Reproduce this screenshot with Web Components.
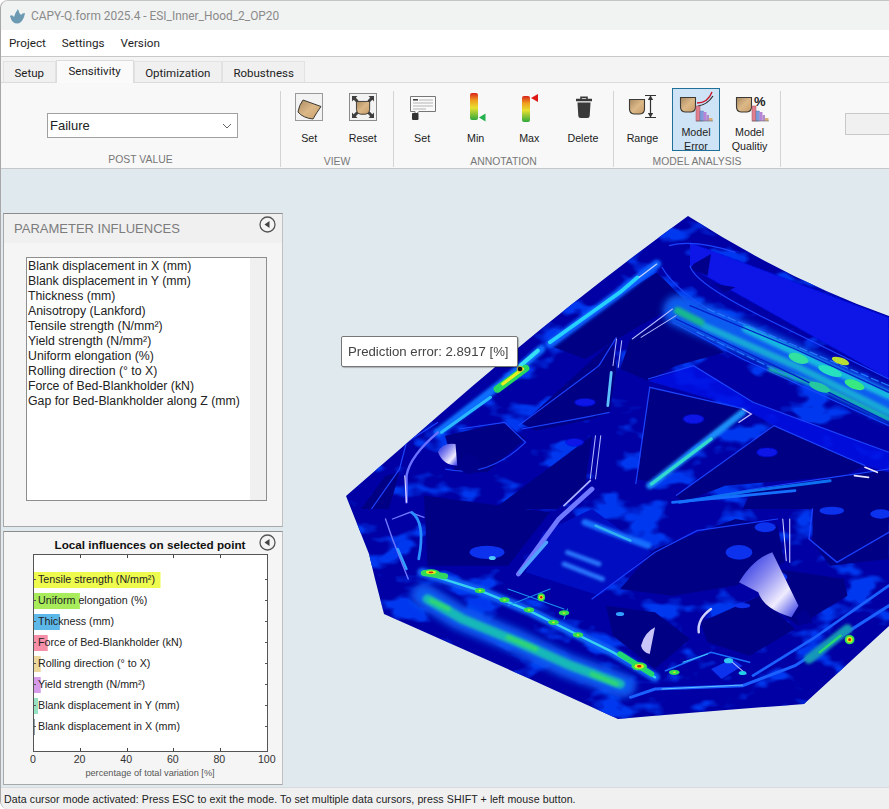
<!DOCTYPE html>
<html lang="en">
<head>
<meta charset="utf-8">
<title>CAPY-Q.form</title>
<style>
html,body{margin:0;padding:0;background:#fff}
body{font-family:"Liberation Sans",Arial,sans-serif;color:#222;width:889px;height:809px;overflow:hidden}
</style>
</head>
<body>
<capy-window>
  <capy-titlebar slot="top">CAPY-Q.form 2025.4 - ESI_Inner_Hood_2_OP20</capy-titlebar>
  <capy-menubar slot="top"><span>Project</span><span>Settings</span><span>Version</span></capy-menubar>
  <capy-tabs slot="top">
    <capy-tab>Setup</capy-tab>
    <capy-tab active>Sensitivity</capy-tab>
    <capy-tab>Optimization</capy-tab>
    <capy-tab>Robustness</capy-tab>
  </capy-tabs>
  <capy-toolstrip slot="top">
    <capy-group label="POST VALUE" w="280"><capy-select>Failure</capy-select></capy-group>
    <capy-group label="VIEW" w="113">
      <capy-tool icon="viewset">Set</capy-tool>
      <capy-tool icon="reset">Reset</capy-tool>
    </capy-group>
    <capy-group label="ANNOTATION" w="220">
      <capy-tool icon="note">Set</capy-tool>
      <capy-tool icon="min">Min</capy-tool>
      <capy-tool icon="max">Max</capy-tool>
      <capy-tool icon="trash">Delete</capy-tool>
    </capy-group>
    <capy-group label="MODEL ANALYSIS" w="167">
      <capy-tool icon="range">Range</capy-tool>
      <capy-tool icon="error" selected>Model<br>Error</capy-tool>
      <capy-tool icon="quality">Model<br>Qualitiy</capy-tool>
    </capy-group>
    <capy-ghost></capy-ghost>
  </capy-toolstrip>
  <capy-viewport>
    <capy-hood slot="scene"></capy-hood>
    <capy-tip slot="scene">Prediction error: 2.8917 [%]</capy-tip>
    <capy-panel heading="PARAMETER INFLUENCES" h="314">
      <capy-list>
        <div>Blank displacement in X (mm)</div>
        <div>Blank displacement in Y (mm)</div>
        <div>Thickness (mm)</div>
        <div>Anisotropy (Lankford)</div>
        <div>Tensile strength (N/mm²)</div>
        <div>Yield strength (N/mm²)</div>
        <div>Uniform elongation (%)</div>
        <div>Rolling direction (° to X)</div>
        <div>Force of Bed-Blankholder (kN)</div>
        <div>Gap for Bed-Blankholder along Z (mm)</div>
      </capy-list>
    </capy-panel>
    <capy-panel h="254">
      <capy-chart title-text="Local influences on selected point" xlabel="percentage of total variation [%]">
        <capy-bar v="54.3" c="#eefb4e">Tensile strength (N/mm²)</capy-bar>
        <capy-bar v="19.7" c="#a8ec5c">Uniform elongation (%)</capy-bar>
        <capy-bar v="11.1" c="#5db8ea">Thickness (mm)</capy-bar>
        <capy-bar v="5.9" c="#f78fa9">Force of Bed-Blankholder (kN)</capy-bar>
        <capy-bar v="2.9" c="#ecd79c">Rolling direction (° to X)</capy-bar>
        <capy-bar v="2.9" c="#d69ce9">Yield strength (N/mm²)</capy-bar>
        <capy-bar v="1.9" c="#98e2c4">Blank displacement in Y (mm)</capy-bar>
        <capy-bar v="0.6" c="#8aa0a8">Blank displacement in X (mm)</capy-bar>
      </capy-chart>
    </capy-panel>
  </capy-viewport>
  <capy-status slot="bottom">Data cursor mode activated: Press ESC to exit the mode. To set multiple data cursors, press SHIFT + left mouse button.</capy-status>
</capy-window>
<script>
const UI='Roboto,"Liberation Sans",Arial,sans-serif';
const AR='"Liberation Sans",Arial,sans-serif';
function el(name,css,html){
  customElements.define(name,class extends HTMLElement{
    constructor(){super();this.attachShadow({mode:'open'});}
    connectedCallback(){
      const h=typeof html==='function'?html(this):html;
      const c=typeof css==='function'?css(this):css;
      this.shadowRoot.innerHTML='<style>'+c+'</style>'+h;
    }
  });
}
const shell=(x,y,s=1)=>`<path transform="translate(${x} ${y}) scale(${s})" d="M.5 .5H15.5V10Q15.5 14.5 11 15H5Q.5 14.5 .5 10Z" fill="url(#tan)" stroke="#3c3a36" stroke-width="1.1"/>`;
const tan=`<defs><linearGradient id="tan" x1="0" y1="0" x2="1" y2="1"><stop offset="0" stop-color="#a98a62"/><stop offset=".5" stop-color="#dcb888"/><stop offset="1" stop-color="#c79c66"/></linearGradient><linearGradient id="rag" x1="0" y1="0" x2="0" y2="1"><stop offset="0" stop-color="#d8241c"/><stop offset=".28" stop-color="#f0a020"/><stop offset=".55" stop-color="#e8e030"/><stop offset="1" stop-color="#2ea83c"/></linearGradient></defs>`;
const bars=(x,y)=>`<g transform="translate(${x} ${y})"><rect x="0" y="0" width="4" height="15" fill="#e0808e" stroke="#a05060" stroke-width=".5"/><rect x="4" y="5" width="3.5" height="10" fill="#7c9cdc" stroke="#5a6ea8" stroke-width=".4"/><rect x="7.5" y="6" width="3" height="9" fill="#b884d8"/><rect x="10.5" y="9" width="2.5" height="6" fill="#b08cc8"/><rect x="13" y="12" width="3.5" height="3" fill="#d8b078"/><path d="M0 15H17" stroke="#666" stroke-width=".6"/></g>`;
const arrow=(x,y,r)=>`<path transform="translate(${x} ${y}) rotate(${r})" d="M0 0L5.5 0L3.8 1.7L6.5 4.4L4.4 6.5L1.7 3.8L0 5.5Z" fill="#3f3f3f"/>`;
const ICONS={
 viewset:`<rect x="8.5" y="3.5" width="27" height="27" fill="#f3f3f3" stroke="#9a9a9a"/><path d="M11 22Q12 15 16 10L34 16.5Q30 22 26 29Q16 28 11 22Z" fill="url(#tan)" stroke="#3c3a36" stroke-width="1"/>`,
 reset:`<rect x="8.5" y="3.5" width="27" height="27" fill="#f3f3f3" stroke="#8a8a8a"/>${shell(15,11,.88)}${arrow(11,6,0)}${arrow(33,6,90)}${arrow(33,28,180)}${arrow(11,28,270)}`,
 note:`<path d="M10.5 6.5H35.5V21.5H19L15 25V21.5H10.5Z" fill="#fafafa" stroke="#777"/><rect x="13" y="9" width="5" height="1.6" fill="#444"/><path d="M19 10H33M13 13H33M13 16H33M13 19H26" stroke="#b4b4b4"/><rect x="12" y="23" width="6.5" height="7" rx="1" fill="#333"/>`,
 min:`<rect x="16" y="3" width="8" height="27" rx="2" fill="url(#rag)"/><path d="M25 27.5L31.5 23.5V31.5Z" fill="#22b14c"/>`,
 max:`<rect x="15" y="6" width="8" height="26" rx="2" fill="url(#rag)"/><path d="M24 8L31 4V12Z" fill="#e01818"/>`,
 trash:`<path d="M15 10H31" stroke="#3a3a3a" stroke-width="2.4"/><path d="M20 9V7.2H26V9" fill="none" stroke="#3a3a3a" stroke-width="1.6"/><path d="M16.5 12.5H29.5L28.7 26Q28.5 28 26.5 28H19.5Q17.5 28 17.3 26Z" fill="#3a3a3a"/>`,
 range:`${shell(9,9)}<path d="M25 5.5H36M25 27.5H36" stroke="#333" stroke-width="1.2"/><path d="M30.5 6V27" stroke="#333" stroke-width="1.2"/><path d="M30.5 5.5L27.8 10H33.2ZM30.5 27.5L27.8 23H33.2Z" fill="#333"/>`,
 error:`${shell(6,7)}<path d="M23 13Q34 13 38 2" fill="none" stroke="#c8182c" stroke-width="1.4"/><path d="M24 16Q33 15 39 6" fill="none" stroke="#222" stroke-width="1.1"/>${bars(22,16)}`,
 quality:`${shell(8,7)}<text x="26" y="15.5" font-family="Liberation Sans,Arial,sans-serif" font-weight="700" font-size="13" fill="#222">%</text>${bars(24,16)}`
};
el('capy-window',`:host{display:flex;flex-direction:column;width:889px;height:809px;background:#f0f0f0;border-left:1px solid #a8a8a8;border-top:1px solid #c4c4c4;box-sizing:border-box;border-radius:8px 0 0 8px;overflow:hidden}
.main{flex:1;min-height:0;display:flex}`,`<slot name="top"></slot><div class="main"><slot></slot></div><slot name="bottom"></slot>`);
el('capy-titlebar',`:host{display:flex;align-items:center;gap:6px;height:29px;padding-left:8px;background:#f1f2f2;color:#8a8a8a;font:11.9px ${UI};flex:none}`,
 `<svg width="16" height="16" viewBox="0 0 16 16"><path d="M1 8Q3 6 5 9Q6 5 9 1Q10 5 12 7Q13 5 16 5Q15 11 12 14Q8 17 4 14Q2 12 1 8Z" fill="#6b9ab2"/></svg><slot></slot>`);
el('capy-menubar',`:host{display:flex;gap:16px;align-items:center;height:26px;padding-left:8px;background:#fff;border-bottom:1px solid #c8c8c8;font:11.7px ${UI};color:#1e1e1e;flex:none}`,`<slot></slot>`);
el('capy-tabs',`:host{display:flex;align-items:flex-end;height:25px;padding-left:2px;background:#f4f4f4;flex:none;border-bottom:1px solid #dcdcdc}`,`<slot></slot>`);
el('capy-tab',t=>`:host{display:block;box-sizing:border-box;font:11.5px ${UI};color:#222;text-align:center;white-space:nowrap;
 ${t.hasAttribute('active')?'height:23px;padding:3px 12px 0;background:#fafafa;border:1px solid #dcdcdc;border-bottom:0;margin-bottom:-1px;position:relative':'height:21px;padding:4px 10.5px 0;background:#f0f0f0;border:1px solid #e2e2e2;border-bottom:0'}}`,`<slot></slot>`);
el('capy-toolstrip',`:host{display:flex;height:86px;background:#f8f8f8;border-bottom:1px solid #c4c8ca;flex:none;box-sizing:border-box}`,`<slot></slot>`);
el('capy-group',g=>`:host{display:flex;flex-direction:column;flex:none;width:${g.getAttribute('w')}px;box-sizing:border-box;border-right:1px solid #d4d4d4;margin:8px 0 0;height:76px}
.b{height:64px;display:flex;justify-content:center;margin-top:-3px;padding-right:2px;box-sizing:border-box}
.l{height:14px;margin-top:4px;text-align:center;font:10.4px/14px ${AR};color:#777}`,
 g=>`<div class="b"><slot></slot></div><div class="l">${g.getAttribute('label')}</div>`);
el('capy-select',`:host{display:flex;align-items:center;justify-content:space-between;box-sizing:border-box;width:191px;height:25px;margin:25px 0 0 6px;padding:0 3px 0 2px;background:#fff;border:1px solid #a0a0a0;font:13px ${AR};color:#222}
svg{margin-right:1px}`,`<slot></slot><svg width="12" height="8" viewBox="0 0 12 8"><path d="M2 2L6 6L10 2" fill="none" stroke="#666" stroke-width="1"/></svg>`);
el('capy-tool',t=>`:host{display:flex;flex-direction:column;align-items:center;flex:none;width:53.6px;height:63px;box-sizing:border-box}
.box{display:flex;flex-direction:column;align-items:center;width:48px;height:63px;box-sizing:border-box;${t.hasAttribute('selected')?'background:#cee4f6;border:1px solid #1f7199;':'border:1px solid transparent;'}}
svg{display:block;flex:none;margin-top:1px}
.t{flex:1;display:flex;align-items:center;justify-content:center;margin-top:1px;${t.querySelector('br')?'padding-bottom:6px;':''}}
.t div{text-align:center;font:10.7px/14px ${AR};color:#222}`,
 t=>`<div class="box"><svg width="44" height="34" viewBox="0 0 44 34">${tan}${ICONS[t.getAttribute('icon')]}</svg><div class="t"><div><slot></slot></div></div></div>`);
el('capy-ghost',`:host{display:block;flex:1;margin:30px 0 0 64px;height:22px;background:#f0f0f0;border:1px solid #c8c8c8;border-right:0;box-sizing:border-box}`,``);
el('capy-viewport',`:host{display:flex;flex-direction:column;gap:4px;flex:1;min-width:0;position:relative;padding:44px 0 0 2px;background:#dfe9ee;box-sizing:border-box;overflow:hidden}`,`<slot name="scene"></slot><slot></slot>`);
el('capy-panel',p=>`:host{display:flex;flex-direction:column;position:relative;flex:none;box-sizing:border-box;width:280px;height:${p.getAttribute('h')}px;background:#f5f5f5;border:1px solid #8c8c8c;border-color:#8c8c8c #c0c0c0 #a8a8a8 #a8a8a8}
.h{display:flex;align-items:center;height:29px;flex:none;padding-left:10px;background:#f0f0f0;font:13px ${AR};color:#7c7c7c}
.c{position:absolute;top:2px;right:6px;width:17px;height:17px}
.body{flex:1;min-height:0;display:flex;flex-direction:column}`,
 p=>`${p.getAttribute('heading')?`<div class="h">${p.getAttribute('heading')}</div>`:''}<svg class="c" viewBox="0 0 17 17"><circle cx="8.5" cy="8.5" r="7.5" fill="#f4f4f4" stroke="#555" stroke-width="1.3"/><path d="M5.5 8.5L10.5 5V12Z" fill="#444"/></svg><div class="body"><slot></slot></div>`);
el('capy-list',`:host{display:flex;box-sizing:border-box;margin:14px 15px 25px 22px;flex:1;min-height:0;background:#fff;border:1px solid #8e8e8e}
.t{flex:1;padding:1px 0 0 1px;font:12.3px/15px ${AR};color:#222;white-space:nowrap}
.s{width:16px;background:#f0f0f0}`,`<div class="t"><slot></slot></div><div class="s"></div>`);
el('capy-chart',c=>`:host{display:flex;flex-direction:column;flex:1;min-height:0;font-family:${AR}}
.ti{height:22px;line-height:26px;font-weight:700;font-size:11.7px;color:#111;text-align:center;padding-left:14px;box-sizing:border-box;white-space:nowrap}
.p{box-sizing:border-box;height:198px;margin:0 14px 0 29px;padding-top:14px;background-color:#fff;border:1px solid #555;border-width:1.5px 1px 1.5px 1.5px;
 background-image:${[20,40,60,80].map(_=>'linear-gradient(#444,#444)').join(',')},${[20,40,60,80].map(_=>'linear-gradient(#444,#444)').join(',')};
 background-size:1px 3px;background-repeat:no-repeat;
 background-position:20% 0,40% 0,60% 0,80% 0,20% 100%,40% 100%,60% 100%,80% 100%}
.x{display:flex;justify-content:space-between;margin:1px 8px 0 21px;font-size:10.6px;color:#333;height:13px;line-height:13px}
.x span{width:16px;text-align:center}
.l{font-size:9.2px;color:#555;text-align:center;padding-left:14px;margin-top:1px;line-height:12px}`,
 c=>`<div class="ti">${c.getAttribute('title-text')}</div><div class="p"><slot></slot></div><div class="x"><span>0</span><span>20</span><span>40</span><span>60</span><span>80</span><span>100</span></div><div class="l">${c.getAttribute('xlabel')}</div>`);
el('capy-bar',b=>`:host{display:block;box-sizing:border-box;height:21px;line-height:21px;padding-left:4px;font-size:10.7px;color:#222;white-space:nowrap;
 background:linear-gradient(#555,#555) left center/2px 1px no-repeat,linear-gradient(#555,#555) right center/2px 1px no-repeat,linear-gradient(${b.getAttribute('c')},${b.getAttribute('c')}) left center/${b.getAttribute('v')}% 16px no-repeat}`,`<slot></slot>`);
el('capy-status',`:host{display:flex;align-items:center;flex:none;height:22px;padding-left:3px;background:#f0f0f0;border-top:1px solid #d8dcde;box-sizing:border-box;font:10.6px ${AR};letter-spacing:.085px;color:#222;white-space:nowrap}`,`<slot></slot>`);
el('capy-tip',`:host{position:absolute;left:340px;top:167px;width:177px;height:31px;box-sizing:border-box;display:flex;align-items:center;padding-left:6px;background:#fff;border:1px solid #777;border-radius:2px;font:13.2px ${AR};color:#444;white-space:nowrap;z-index:2;box-shadow:1px 1px 1px rgba(0,0,0,.25)}`,`<slot></slot>`);
const F='filterUnits="userSpaceOnUse" x="-300" y="-300" width="2300" height="1600"';
const hoodSVG=`<svg xmlns="http://www.w3.org/2000/svg" width="889" height="617" viewBox="0 170 889 617">
<defs>
<filter id="b0" ${F}><feGaussianBlur stdDeviation="1.2"/></filter>
<filter id="b1" ${F}><feGaussianBlur stdDeviation="2.2"/></filter>
<filter id="b2" ${F}><feGaussianBlur stdDeviation="4.5"/></filter>
<filter id="b4" ${F}><feGaussianBlur stdDeviation="11"/></filter>
<filter id="noise" filterUnits="userSpaceOnUse" x="330" y="200" width="560" height="530"><feTurbulence type="fractalNoise" baseFrequency=".024 .04" numOctaves="3" seed="7"/><feColorMatrix values="0 0 0 0 0  0 0 0 0 .04  0 0 0 0 .86  7 0 0 0 -3.7"/></filter>
<clipPath id="hc"><path d="M688 217Q790 282 889 317V627L804 705Q700 713 618 720L530 680L384 615L375 580L369 555L346 497L438 417Q560 310 688 217Z"/></clipPath>
<linearGradient id="wh" x1="0" y1="0" x2="1" y2="1"><stop offset="0" stop-color="#1420e0"/><stop offset=".4" stop-color="#8a8af0"/><stop offset=".7" stop-color="#f0ecff"/><stop offset=".85" stop-color="#8a8cf0"/><stop offset="1" stop-color="#2a30e8"/></linearGradient>
</defs>
<g clip-path="url(#hc)">
<rect y="170" width="889" height="617" fill="#0000a4"/>
<rect x="330" y="200" width="560" height="530" filter="url(#noise)"/>
<g transform="translate(340 210) scale(.35 .3333)">
 <g fill="#000084" filter="url(#b0)">
  <path d="M520 645L780 395L790 480L770 610L720 630L560 665Z"/>
  <path d="M850 810L885 535L1155 600L1000 720L890 820Z"/>
  <path d="M440 900L720 680L700 830L620 900Z"/>
  <path d="M960 860L1240 650L1500 770L1440 800L1100 830L980 880Z"/>
  <path d="M830 390L960 300L1000 370L1100 430L960 470L880 515L800 480Z"/>
  <path d="M905 190L1000 290L960 290L840 360L700 450L600 410L800 260Z"/>
  <path d="M300 680L470 640L530 690L420 790L330 790Z"/>
  <path d="M840 280L880 240L910 300L860 320Z"/>
  <path d="M1180 840L1568 780V900H1150Z"/>
  <path d="M60 900L130 800L170 790L140 900Z"/>
 </g>
 <g fill="#0814e6" filter="url(#b1)">
  <path d="M1000 100L1568 325V510L1000 175Z"/>
  <path d="M880 515L1010 470L1180 580L1568 730V790L1500 770L1240 650L1155 600Z" opacity=".8"/>
  <ellipse cx="1220" cy="730" rx="30" ry="14"/><ellipse cx="700" cy="580" rx="30" ry="12"/><ellipse cx="1010" cy="630" rx="30" ry="14"/><ellipse cx="670" cy="700" rx="26" ry="12"/>
 </g>
 <g fill="#00008a" filter="url(#b0)"><path d="M1010 165L1060 135L1050 200L1000 180Z"/><path d="M1070 225L1130 235L1100 250Z"/></g>
 <g fill="none" stroke="#1c44ff" stroke-width="3.5">
  <path d="M510 650L740 470L790 385"/>
  <path d="M520 660L700 625L770 610"/>
  <path d="M845 825L885 535L1155 600"/>
  <path d="M960 860L1240 650L1500 770"/>
  <path d="M970 880L1180 840L1440 800L1568 780"/>
  <path d="M940 110Q1010 90 1130 130"/>
  <path d="M1000 170Q1010 220 1200 320L1568 510"/>
  <path d="M920 175Q960 250 1100 330L1568 570"/>
  <path d="M950 340L1150 450L1568 650"/>
  <path d="M880 510L1010 470L1180 580L1568 730"/>
  <path d="M300 780Q420 810 530 700L470 640L340 660"/>
  <path d="M90 900L170 780L190 700L280 640"/>
 </g>
 <g fill="none" stroke-linecap="round">
  <path d="M905 165L800 250L600 405" stroke="#0b60ff" stroke-width="26" filter="url(#b2)"/>
  <path d="M850 205L800 250L600 400" stroke="#27d0ff" stroke-width="11" filter="url(#b1)"/>
  <path d="M905 165L855 205" stroke="#c8d0ff" stroke-width="3.5" filter="url(#b0)"/>
  <path d="M575 420L460 525L280 670" stroke="#0b70ff" stroke-width="24" filter="url(#b2)"/>
  <path d="M565 425L515 470" stroke="#35e0f4" stroke-width="12" filter="url(#b1)"/>
  <path d="M430 565L290 670" stroke="#2ab8ff" stroke-width="9" filter="url(#b1)"/>
  <path d="M530 478L450 540" stroke="#28d860" stroke-width="22" filter="url(#b0)"/>
  <path d="M522 480L465 525" stroke="#e8f020" stroke-width="9" filter="url(#b0)"/>
  <path d="M280 670Q200 740 190 800L190 880" stroke="#6a70ff" stroke-width="7" filter="url(#b1)"/>
  <path d="M185 800L190 880" stroke="#e4e0ff" stroke-width="3" filter="url(#b0)"/>
  <path d="M970 305L1250 430L1568 590" stroke="#0b5cf0" stroke-width="95" filter="url(#b4)"/>
  <path d="M1040 350L1300 470L1568 610" stroke="#14a8d8" stroke-width="20" filter="url(#b2)"/>
  <path d="M1160 360L1380 470L1568 560" stroke="#18b8e0" stroke-width="22" filter="url(#b2)"/>
  <path d="M965 305L1030 340" stroke="#18b890" stroke-width="22" filter="url(#b2)"/>
  <path d="M1230 480L1380 535L1568 630" stroke="#18b8b0" stroke-width="14" filter="url(#b2)"/>
  <path d="M1000 290L1300 420L1568 550M960 330L1300 500L1568 640" stroke="#0020c8" stroke-width="4" filter="url(#b0)"/>
  <path d="M1050 300L1300 410L1568 530M1020 370L1300 510" stroke="#2a80ff" stroke-width="3" stroke-dasharray="22 10" filter="url(#b0)"/>
  <path d="M790 390L780 470M805 395L795 475" stroke="#b0b6ff" stroke-width="3"/>
  <path d="M775 490L765 590" stroke="#5cc0ff" stroke-width="8" filter="url(#b1)"/>
  <path d="M730 680L715 810M745 680L730 810" stroke="#b0b6ff" stroke-width="3"/>
  <path d="M715 815L640 890" stroke="#b0b4ff" stroke-width="5" filter="url(#b0)"/>
  <path d="M835 390L950 300M860 385L960 320" stroke="#b0b8ff" stroke-width="3"/>
  <path d="M885 830L1150 610" stroke="#1a90f8" stroke-width="20" filter="url(#b2)"/>
  <path d="M890 825L1060 690" stroke="#30d8d0" stroke-width="10" filter="url(#b1)"/>
  <path d="M1150 600L1175 615L1140 640" stroke="#c0c0ff" stroke-width="4"/>
  <path d="M970 880L1180 845L1400 815" stroke="#0e70f0" stroke-width="9" filter="url(#b1)"/>
  <path d="M1500 775L1535 790M1470 800L1510 805" stroke="#e8e4ff" stroke-width="5" filter="url(#b0)"/>
 </g>
 <path d="M280 730Q290 700 330 705L335 770Q295 770 280 730Z" fill="url(#wh)" filter="url(#b0)"/>
 <circle cx="370" cy="765" r="30" fill="#00008a" filter="url(#b0)"/>
 <g filter="url(#b1)">
  <ellipse cx="1430" cy="456" rx="26" ry="10" fill="#b8e030" transform="rotate(20 1430 456)"/>
  <ellipse cx="1310" cy="448" rx="30" ry="14" fill="#30e0a0" transform="rotate(20 1310 448)"/>
  <ellipse cx="1400" cy="486" rx="36" ry="13" fill="#25e0c0" transform="rotate(22 1400 486)"/>
  <ellipse cx="1470" cy="527" rx="30" ry="13" fill="#38e880" transform="rotate(22 1470 527)"/>
  <ellipse cx="1370" cy="535" rx="32" ry="12" fill="#28c8a0" transform="rotate(22 1370 535)"/>
 </g>
</g>
<g transform="translate(340 490) scale(.35 .3333)">
 <g fill="#000084" filter="url(#b0)">
  <path d="M580 130L720 60L890 190L740 320L530 250Z" fill="#000cc0"/>
  <path d="M900 180L1130 90L1250 110L1270 220L1130 290L950 320L800 300Z"/>
  <path d="M1350 60L1568 20V210L1400 230L1350 160Z"/>
  <path d="M240 20L600 70L480 230L250 230Z"/>
  <path d="M760 350L900 370L1000 450L900 540L780 440Z"/>
  <path d="M1030 400L1200 320L1300 420L1170 500L1050 460Z"/>
  <path d="M1250 240L1440 270L1450 320L1310 410L1230 350Z"/>
 </g>
 <g fill="#0a30ee" filter="url(#b0)">
  <ellipse cx="1140" cy="190" rx="38" ry="22"/>
  <ellipse cx="1405" cy="65" rx="35" ry="12"/>
  <ellipse cx="1215" cy="115" rx="30" ry="15"/>
  <ellipse cx="1250" cy="265" rx="28" ry="16"/>
  <ellipse cx="1545" cy="75" rx="30" ry="14"/>
  <ellipse cx="1150" cy="350" rx="22" ry="8"/>
  <ellipse cx="420" cy="190" rx="50" ry="20"/>
  <path d="M1060 540L1120 510L1150 530L1090 570Z"/>
 </g>
 <g fill="none" stroke-linecap="round">
  <path d="M950 40L1100 25L1300 5" stroke="#1870ff" stroke-width="8" filter="url(#b1)"/>
  <path d="M1350 60L1340 150L1420 220L1568 130" stroke="#1a40ff" stroke-width="4"/>
  <path d="M720 330L900 190L1020 125L1250 90" stroke="#1a40ff" stroke-width="3.5"/>
  <path d="M240 85L200 70L150 90M130 90L150 150L195 270" stroke="#7078ff" stroke-width="4" filter="url(#b0)"/>
  <path d="M205 70Q245 100 225 210" stroke="#2a90ff" stroke-width="8" filter="url(#b1)"/>
  <path d="M165 180L190 240" stroke="#30a0ff" stroke-width="7" filter="url(#b1)"/>
  <path d="M720 0L625 90L510 255" stroke="#7078ff" stroke-width="14" filter="url(#b1)"/>
  <path d="M590 160L515 250" stroke="#50a0ff" stroke-width="10" filter="url(#b1)"/>
  <path d="M700 100L880 170" stroke="#1470ff" stroke-width="20" filter="url(#b2)"/>
  <path d="M730 110L830 155" stroke="#30b0f0" stroke-width="7" filter="url(#b1)"/>
  <path d="M650 190L740 225M640 225L750 270" stroke="#2a78ff" stroke-width="14" filter="url(#b2)"/>
  <path d="M1265 90L1275 215M1285 90L1285 220" stroke="#d0d4ff" stroke-width="3"/>
  <path d="M240 320L340 385L500 455L650 530L810 590" stroke="#0d58f0" stroke-width="72" filter="url(#b4)"/>
  <path d="M250 330L350 390L510 460L660 530L800 585" stroke="#16b8b8" stroke-width="28" filter="url(#b2)"/>
  <path d="M260 335L310 360M480 445L560 480M720 555L790 585" stroke="#30d870" stroke-width="13" filter="url(#b2)"/>
  <path d="M235 250L400 305L540 365L680 438L780 490L900 565" stroke="#0d60f6" stroke-width="28" filter="url(#b2)"/>
  <path d="M235 250L400 305L540 365L680 438L780 490L900 565" stroke="#38d0f0" stroke-width="7" filter="url(#b0)"/>
  <path d="M240 252L300 262" stroke="#30d860" stroke-width="18" filter="url(#b1)"/>
  <path d="M800 495L890 555" stroke="#20d870" stroke-width="16" filter="url(#b1)"/>
  <path d="M830 625L900 600L1150 590L1300 530L1568 350" stroke="#1a60ff" stroke-width="9" filter="url(#b1)"/>
  <path d="M920 600L1150 588" stroke="#60c0ff" stroke-width="3" filter="url(#b0)"/>
  <path d="M930 545L1060 490L1170 520" stroke="#1a70ff" stroke-width="5" filter="url(#b0)"/>
  <path d="M980 520L1050 495" stroke="#40c0ff" stroke-width="3"/>
  <path d="M1340 510L1450 420" stroke="#1498b8" stroke-width="28" filter="url(#b2)"/>
  <path d="M1370 490L1430 440" stroke="#28d870" stroke-width="7" filter="url(#b1)"/>
  <path d="M1180 560L1350 450L1568 290" stroke="#1a60ff" stroke-width="8" filter="url(#b1)"/>
  <path d="M1025 430Q1020 390 1060 360" stroke="#d0d0ff" stroke-width="7" filter="url(#b1)"/>
  <path d="M1110 510L1160 555" stroke="#b0c0ff" stroke-width="3"/>
  <path d="M480 300L640 360M480 350L600 300M650 360L640 390" stroke="#1a90f0" stroke-width="3"/>
 </g>
 <path d="M1140 280Q1180 210 1235 190L1310 350L1290 385Q1210 360 1195 310Z" fill="url(#wh)" filter="url(#b1)"/>
 <path d="M860 470Q870 430 900 415L885 495Q865 490 860 470Z" fill="#c8c4fa" filter="url(#b1)"/>
 <path d="M1300 380L1330 360L1350 400L1310 410Z" fill="#000090"/>
 <ellipse cx="800" cy="375" rx="12" ry="6" fill="#30a0ff" filter="url(#b0)"/>
 <ellipse cx="435" cy="207" rx="10" ry="6" fill="#50c8ff" filter="url(#b0)"/>
 <ellipse cx="1110" cy="515" rx="13" ry="8" fill="#30c8f0" filter="url(#b0)"/>
 <ellipse cx="1150" cy="552" rx="11" ry="6" fill="#20d0e8" filter="url(#b0)"/>
 <g>
  ${[[400,305],[470,333],[540,363],[610,400],[680,438],[955,550],[640,372]].map(p=>`<ellipse cx="${p[0]}" cy="${p[1]}" rx="15" ry="8" fill="#30e050" filter="url(#b1)"/><ellipse cx="${p[0]}" cy="${p[1]}" rx="4" ry="2.5" fill="#d8e820" filter="url(#b0)"/>`).join('')}
  ${[[260,250,24,9],[575,325,11,12],[855,532,22,12],[1456,452,14,14]].map(p=>`<ellipse cx="${p[0]}" cy="${p[1]}" rx="${p[2]}" ry="${p[3]}" fill="#30e050" filter="url(#b1)"/><ellipse cx="${p[0]}" cy="${p[1]}" rx="${p[2]*.6}" ry="${p[3]*.6}" fill="#e8e820" filter="url(#b0)"/><ellipse cx="${p[0]}" cy="${p[1]}" rx="${p[2]*.3}" ry="${p[3]*.3}" fill="#c82010" filter="url(#b0)"/>`).join('')}
 </g>
</g>
</g>
<circle cx="520" cy="370" r="2.8" fill="#111" stroke="#f0e030" stroke-width=".8"/>
</svg>`;
el('capy-hood',`:host{position:absolute;left:-1px;top:0;width:889px;height:617px;display:block}svg{display:block}`,hoodSVG);
</script>
</body>
</html>
